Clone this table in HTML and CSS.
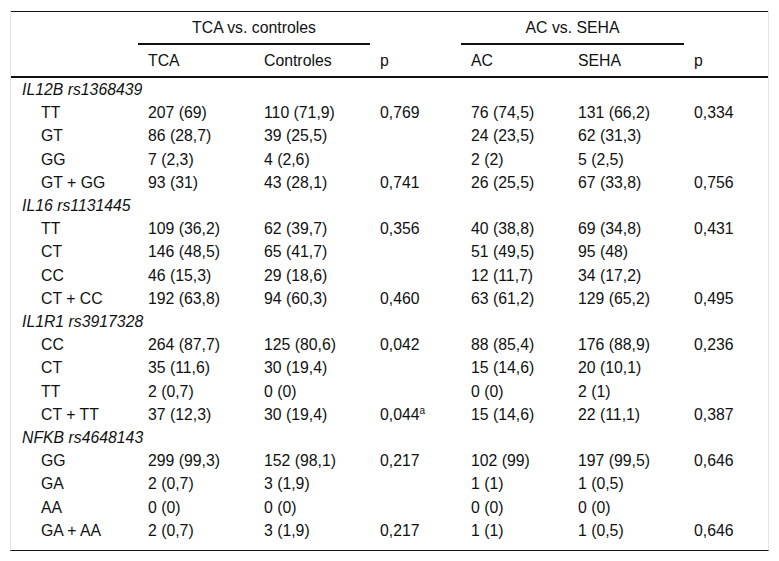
FILE: index.html
```html
<!DOCTYPE html>
<html lang="es">
<head>
<meta charset="utf-8">
<title>Tabla</title>
<link rel="stylesheet" href="styles.css">
</head>
<body>
<div class="frame">
<table class="data">
<colgroup>
<col class="c1"><col class="c2"><col class="c3"><col class="c4"><col class="c5"><col class="c6"><col class="c7">
</colgroup>
<thead>
<tr class="h1">
<th></th>
<th colspan="2" class="span">TCA vs. controles</th>
<th></th>
<th colspan="2" class="span">AC vs. SEHA</th>
<th></th>
</tr>
<tr class="h2">
<th></th><th>TCA</th><th>Controles</th><th>p</th><th>AC</th><th>SEHA</th><th>p</th>
</tr>
</thead>
<tbody>
<tr class="grp"><td colspan="7">IL12B rs1368439</td></tr>
<tr><td>TT</td><td>207 (69)</td><td>110 (71,9)</td><td>0,769</td><td>76 (74,5)</td><td>131 (66,2)</td><td>0,334</td></tr>
<tr><td>GT</td><td>86 (28,7)</td><td>39 (25,5)</td><td></td><td>24 (23,5)</td><td>62 (31,3)</td><td></td></tr>
<tr><td>GG</td><td>7 (2,3)</td><td>4 (2,6)</td><td></td><td>2 (2)</td><td>5 (2,5)</td><td></td></tr>
<tr><td>GT + GG</td><td>93 (31)</td><td>43 (28,1)</td><td>0,741</td><td>26 (25,5)</td><td>67 (33,8)</td><td>0,756</td></tr>
<tr class="grp"><td colspan="7">IL16 rs1131445</td></tr>
<tr><td>TT</td><td>109 (36,2)</td><td>62 (39,7)</td><td>0,356</td><td>40 (38,8)</td><td>69 (34,8)</td><td>0,431</td></tr>
<tr><td>CT</td><td>146 (48,5)</td><td>65 (41,7)</td><td></td><td>51 (49,5)</td><td>95 (48)</td><td></td></tr>
<tr><td>CC</td><td>46 (15,3)</td><td>29 (18,6)</td><td></td><td>12 (11,7)</td><td>34 (17,2)</td><td></td></tr>
<tr><td>CT + CC</td><td>192 (63,8)</td><td>94 (60,3)</td><td>0,460</td><td>63 (61,2)</td><td>129 (65,2)</td><td>0,495</td></tr>
<tr class="grp"><td colspan="7">IL1R1 rs3917328</td></tr>
<tr><td>CC</td><td>264 (87,7)</td><td>125 (80,6)</td><td>0,042</td><td>88 (85,4)</td><td>176 (88,9)</td><td>0,236</td></tr>
<tr><td>CT</td><td>35 (11,6)</td><td>30 (19,4)</td><td></td><td>15 (14,6)</td><td>20 (10,1)</td><td></td></tr>
<tr><td>TT</td><td>2 (0,7)</td><td>0 (0)</td><td></td><td>0 (0)</td><td>2 (1)</td><td></td></tr>
<tr><td>CT + TT</td><td>37 (12,3)</td><td>30 (19,4)</td><td>0,044<sup>a</sup></td><td>15 (14,6)</td><td>22 (11,1)</td><td>0,387</td></tr>
<tr class="grp"><td colspan="7">NFKB rs4648143</td></tr>
<tr><td>GG</td><td>299 (99,3)</td><td>152 (98,1)</td><td>0,217</td><td>102 (99)</td><td>197 (99,5)</td><td>0,646</td></tr>
<tr><td>GA</td><td>2 (0,7)</td><td>3 (1,9)</td><td></td><td>1 (1)</td><td>1 (0,5)</td><td></td></tr>
<tr><td>AA</td><td>0 (0)</td><td>0 (0)</td><td></td><td>0 (0)</td><td>0 (0)</td><td></td></tr>
<tr><td>GA + AA</td><td>2 (0,7)</td><td>3 (1,9)</td><td>0,217</td><td>1 (1)</td><td>1 (0,5)</td><td>0,646</td></tr>
</tbody>
</table>
</div>
</body>
</html>
```

FILE: styles.css
```css
html, body {
  margin: 0;
  padding: 0;
  background: #fff;
}
body {
  padding: 10px;
  font-family: "Liberation Sans", Arial, sans-serif;
  font-size: 15.8px;
  color: #111;
}
.frame {
  width: 757px;
  border-left: 1px solid #e4e4e4;
  border-right: 1px solid #e4e4e4;
  border-bottom: 1px solid #111;
  padding-top: 1px;
  padding-bottom: 8px;
}
.data {
  width: 757px;
  table-layout: fixed;
  border-collapse: separate;
  border-spacing: 0;
  border-top: 1px solid #111;
}
.c1 { width: 127px; }
.c2 { width: 116px; }
.c3 { width: 116px; }
.c4 { width: 91px; }
.c5 { width: 107px; }
.c6 { width: 116px; }
.c7 { width: 84px; }
.data th {
  font-weight: normal;
  text-align: left;
  line-height: 17px;
  padding: 7px 0 7px 10px;
  vertical-align: middle;
}
.h1 th {
  border-bottom: 2px solid transparent;
}
.h1 th.span {
  text-align: center;
  padding-left: 0;
  border-bottom: 2px solid #111;
}
.h2 th {
  border-bottom: 2px solid #111;
}
.data td {
  line-height: 17.2px;
  padding: 3px 0 3px 10px;
  white-space: nowrap;
  vertical-align: middle;
}
.data tbody td:first-child {
  padding-left: 30px;
}
.data tbody .grp td {
  padding-left: 11px;
  font-style: italic;
}
.data sup {
  font-size: 10px;
  line-height: 0;
  vertical-align: 6px;
}
```
